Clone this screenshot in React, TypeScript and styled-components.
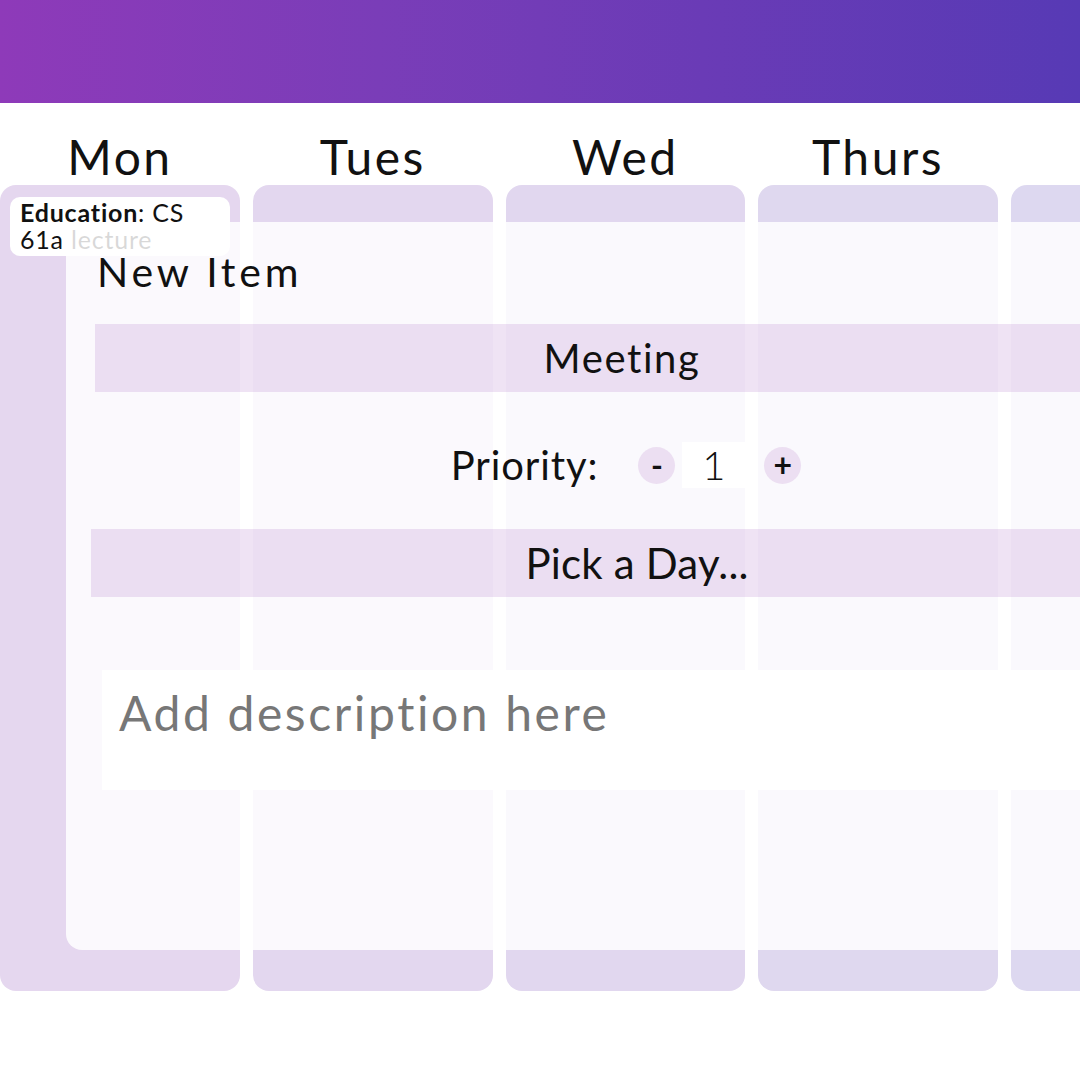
import React from "react";
import styled, { createGlobalStyle } from "styled-components";

const Global = createGlobalStyle`
  html, body { margin: 0; padding: 0; background: #ffffff; }
  body { font-family: "Lato", "Noto Sans", sans-serif; color: #111; overflow: hidden; }
  * { box-sizing: border-box; }
`;

const Page = styled.div`
  position: relative;
  width: 1080px;
  height: 1080px;
  overflow: hidden;
`;

const Header = styled.header`
  height: 103px;
  background: linear-gradient(90deg, #8e3ab9 0%, #7a3db8 35%, #6a3bb6 65%, #573ab5 100%);
`;

const Board = styled.div`
  display: flex;
  gap: 13px;
`;

const DayColumn = styled.section`
  flex: 0 0 239.6px;
  display: flex;
  flex-direction: column;
`;

const DayName = styled.h2`
  margin: 0;
  height: 82px;
  padding-top: 26px;
  text-align: center;
  font-size: 48px;
  font-weight: 400;
  line-height: 56px;
  letter-spacing: 2.5px;
  color: #111;
`;

const DayBody = styled.div<{ $bg: string }>`
  height: 806px;
  border-radius: 16px;
  background: ${(p) => p.$bg};
  padding: 12px 10px;
`;

const EventCard = styled.div`
  width: 220px;
  height: 59px;
  background: #ffffff;
  border-radius: 10px;
  padding: 2px 10px;
  font-size: 25px;
  line-height: 27px;
  letter-spacing: 0.8px;
  color: #111;
  b { font-weight: 700; }
`;

const Modal = styled.div`
  position: absolute;
  left: 66px;
  top: 222px;
  width: 1120px;
  height: 728px;
  border-radius: 16px;
  background: rgba(255, 255, 255, 0.84);
  display: flex;
  flex-direction: column;
  padding: 22px 0 0;
`;

const Title = styled.h1`
  margin: 0 0 0 31px;
  font-size: 41px;
  font-weight: 400;
  line-height: 56px;
  letter-spacing: 3.8px;
  color: #111;
`;

const Bar = styled.div<{ $left: number; $width: number; $size: number; $spacing: number }>`
  margin-left: ${(p) => p.$left}px;
  width: ${(p) => p.$width}px;
  height: 68px;
  background: rgba(175, 115, 200, 0.2);
  display: flex;
  align-items: center;
  justify-content: center;
  font-size: ${(p) => p.$size}px;
  letter-spacing: ${(p) => p.$spacing}px;
  color: #111;
`;

const PriorityRow = styled.div`
  height: 46px;
  margin: 50px 0 41px;
  display: flex;
  align-items: center;
  justify-content: center;
  font-size: 40px;
  color: #111;
`;

const PriorityLabel = styled.span`
  margin-right: 40px;
  letter-spacing: 0.9px;
`;

const RoundButton = styled.span`
  width: 37px;
  height: 37px;
  border-radius: 50%;
  background: #ecdff2;
  display: flex;
  align-items: center;
  justify-content: center;
  font-size: 32px;
  font-weight: 700;
  line-height: 1;
  color: #111;
`;

const NumberBox = styled.span`
  width: 63px;
  height: 46px;
  margin: 0 19px 0 7px;
  background: #ffffff;
  display: flex;
  align-items: center;
  justify-content: center;
  font-size: 40px;
  font-weight: 300;
`;

const Description = styled.div`
  margin: 73px 0 0 36px;
  height: 120px;
  background: #ffffff;
  padding: 10px 17px;
  font-size: 48px;
  line-height: 66px;
  letter-spacing: 2.6px;
  color: #777777;
`;

const days = [
  { name: "Mon", bg: "#e5d7ef" },
  { name: "Tues", bg: "#e3d7ef" },
  { name: "Wed", bg: "#e1d7ef" },
  { name: "Thurs", bg: "#dfd8ef" },
  { name: "Fri", bg: "#ddd8f0" },
];

export default function App() {
  return (
    <Page>
      <Global />
      <Header />
      <Board>
        {days.map((d, i) => (
          <DayColumn key={d.name}>
            <DayName>{i < 4 ? d.name : ""}</DayName>
            <DayBody $bg={d.bg}>
              {i === 0 && (
                <EventCard>
                  <b>Education</b>: CS 61a lecture
                </EventCard>
              )}
            </DayBody>
          </DayColumn>
        ))}
      </Board>
      <Modal>
        <Title>New Item</Title>
        <Bar $left={29} $width={1054} $size={40} $spacing={1.6} style={{ marginTop: 24 }}>
          Meeting
        </Bar>
        <PriorityRow>
          <PriorityLabel>Priority:</PriorityLabel>
          <RoundButton>-</RoundButton>
          <NumberBox>1</NumberBox>
          <RoundButton>+</RoundButton>
        </PriorityRow>
        <Bar $left={25} $width={1092} $size={42} $spacing={0.2}>
          Pick a Day...
        </Bar>
        <Description>Add description here</Description>
      </Modal>
    </Page>
  );
}
